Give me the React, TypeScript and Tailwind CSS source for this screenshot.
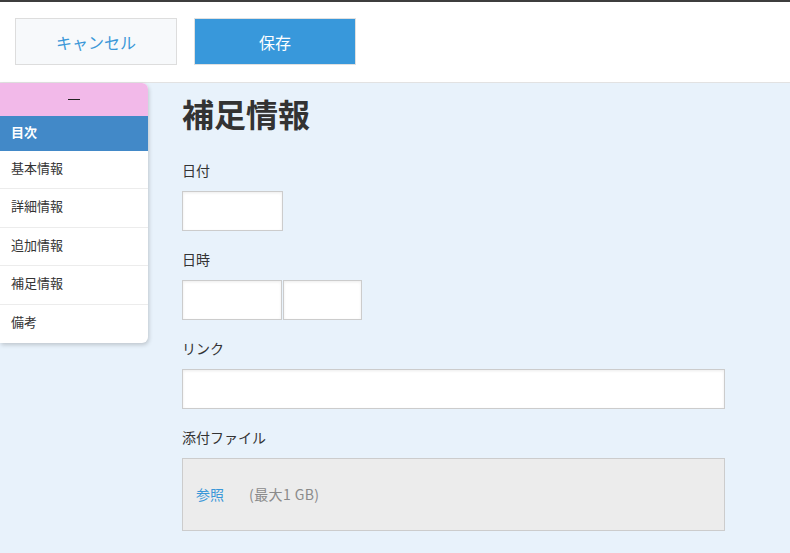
const font = { fontFamily: '"Noto Sans CJK JP", "Noto Sans", sans-serif' };

const tocItems = ["基本情報", "詳細情報", "追加情報", "補足情報", "備考"];

const inputCls =
  "h-10 border border-[#cccccc] bg-white shadow-[inset_0_1px_3px_rgba(0,0,0,0.08)]";

const Field = ({ label, children }: { label: string; children: React.ReactNode }) => (
  <div className="mb-[21px]">
    <div className="mb-[9px] h-[19px] text-[14px] leading-[14px] text-[#333]">{label}</div>
    {children}
  </div>
);

export default function App() {
  return (
    <div className="min-h-[553px] w-[790px] overflow-hidden bg-[#e8f2fb]" style={font}>
      {/* header */}
      <header className="border-t-2 border-b border-t-[#3d3d3d] border-b-[#e2e2e2] bg-white">
        <div className="flex h-[80px] items-start gap-[17px] pl-[15px] pt-[16px]">
          <button className="h-[47px] w-[162px] border border-[#dddddd] bg-[#f7f9fb] text-[16px] text-[#3a97d8]">
            キャンセル
          </button>
          <button className="h-[47px] w-[162px] border border-[#e0e0e0] bg-[#3898db] text-[16px] text-white">
            保存
          </button>
        </div>
      </header>

      <div className="flex items-start">
        {/* toc sidebar */}
        <nav className="w-[148px] shrink-0 overflow-hidden rounded-r-md bg-white shadow-[1px_2px_4px_rgba(0,0,0,0.18)]">
          <div className="flex h-[33px] items-center justify-center bg-[#f2b9e9]">
            <span className="block h-px w-[12px] bg-[#222]" />
          </div>
          <div className="flex h-[35px] items-center bg-[#4289c8] pb-[4px] pl-[11px] text-[13px] font-bold text-white">
            目次
          </div>
          {tocItems.map((item, i) => (
            <div
              key={item}
              className={
                i < tocItems.length - 1
                  ? "flex h-[38.4px] items-center border-b border-[#ececec] pb-[4px] pl-[11px] text-[13px] text-[#333]"
                  : "flex h-[38.4px] items-center pb-[4px] pl-[11px] text-[13px] text-[#333]"
              }
            >
              {item}
            </div>
          ))}
        </nav>

        {/* form */}
        <main className="ml-[34px] flex-1 pt-[13px]">
          <h1 className="mb-[30px] h-[37px] text-[32px] font-bold leading-[34px] text-[#333]">補足情報</h1>

          <Field label="日付">
            <div className={`${inputCls} w-[101px]`} />
          </Field>

          <Field label="日時">
            <div className="flex">
              <div className={`${inputCls} w-[100px]`} />
              <div className={`${inputCls} ml-px w-[79px]`} />
            </div>
          </Field>

          <Field label="リンク">
            <div className={`${inputCls} w-[543px]`} />
          </Field>

          <Field label="添付ファイル">
            <div className="flex h-[73px] w-[543px] items-center border border-[#cccccc] bg-[#ececec] pl-[13px] text-[14px]">
              <span className="text-[#3a97d8]">参照</span>
              <span className="ml-[25px] tracking-[0.4px] text-[#8a8a8a]">(最大1 GB)</span>
            </div>
          </Field>
        </main>
      </div>
    </div>
  );
}
